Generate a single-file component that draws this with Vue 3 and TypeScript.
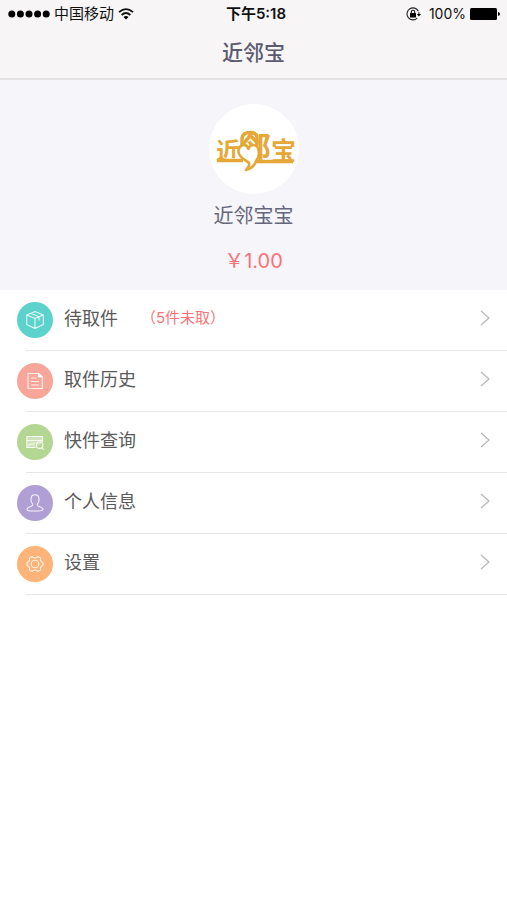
<script setup lang="ts">
type IconName = 'box' | 'history' | 'search' | 'person' | 'settings'

interface MenuItem {
  label: string
  icon: IconName
  note?: string
}

const items: MenuItem[] = [
  { label: '待取件', icon: 'box', note: '（5件未取）' },
  { label: '取件历史', icon: 'history' },
  { label: '快件查询', icon: 'search' },
  { label: '个人信息', icon: 'person' },
  { label: '设置', icon: 'settings' },
]
</script>

<template>
  <div class="page">
    <header class="top">
      <div class="status">
        <div class="status-left">
          <svg class="signal" viewBox="0 0 42 8" aria-hidden="true">
            <circle v-for="n in 5" :key="n" :cx="n * 8.6 - 4.8" cy="4" r="3.5" />
          </svg>
          <span>中国移动</span>
          <svg class="wifi" viewBox="0 0 16 12" aria-hidden="true">
            <path d="M1 4.2Q8-2 15 4.2M3.6 7Q8 3.1 12.4 7" fill="none" stroke="#111" stroke-width="1.8" />
            <path d="M5.5 9Q8 6.8 10.5 9L8 11.6Z" />
          </svg>
        </div>
        <strong class="time">下午5:18</strong>
        <div class="status-right">
          <svg class="lock" viewBox="0 0 15 14" aria-hidden="true">
            <path d="M12.4 4.2A6 6 0 1 0 11.2 11.2M12.9 5.3V7.5" fill="none" stroke="#222" stroke-width="1.1" />
            <path d="M10.8 7H15L12.9 9.6Z" />
            <rect x="4" y="6" width="6" height="4.6" rx=".5" />
            <path d="M5.3 6.4V5a1.7 1.7 0 0 1 3.4 0v1.4" fill="none" stroke="#111" stroke-width="1.1" />
          </svg>
          <span>100%</span>
          <svg class="battery" viewBox="0 0 30 12" aria-hidden="true">
            <rect width="27" height="12" rx="1.5" />
            <path d="M28 4Q30 4.5 30 6T28 8Z" />
          </svg>
        </div>
      </div>
      <h1 class="title">近邻宝</h1>
    </header>

    <section class="profile">
      <div class="avatar">
        <svg viewBox="0 0 90 90" role="img" aria-label="近邻宝">
          <g class="logo-text">
            <text x="7" y="56" font-size="24">近</text>
            <text x="31" y="55" font-size="31">邻</text>
            <text x="62" y="56" font-size="25">宝</text>
          </g>
          <path d="M8 56.5H34M46 57.5H84" fill="none" stroke="#e5a736" stroke-width="3.4" />
          <path d="M33 41V34Q34 28.500 41 28.500T48 34V42" fill="none" stroke="#e5a736" stroke-width="3.4" />
          <path
            d="M39.500 45C37 38 29 41 29.500 48C30 54 37 56 40 59C41 62 39 63 37 66C43 64 46 61 47 57C52 51 50 41 44.500 41C42 41 40 43 39.500 45Z"
            fill="#fff" stroke="#e5a736" stroke-width="2.6" stroke-linejoin="round"
          />
        </svg>
      </div>
      <p class="name">近邻宝宝</p>
      <p class="balance">￥1.00</p>
    </section>

    <nav>
      <ul class="menu">
        <li v-for="item in items" :key="item.icon">
          <a href="#" class="row">
            <span class="badge" :class="item.icon">
              <svg viewBox="0 0 20 20" aria-hidden="true">
                <g v-if="item.icon === 'box'">
                  <path d="M10 1.5L18.3 5V14.6L10 18.6L1.7 14.6V5ZM1.7 5L10 8.6L18.3 5M10 8.6V18.6M5.8 3.2L14 6.8V10.5" />
                </g>
                <g v-else-if="item.icon === 'history'">
                  <path d="M3 2.5H13.5L17.3 6V17.5H3Z" />
                  <path d="M13.5 2.5V6H17.3Z" fill="#fff" />
                  <path d="M6 7H11.5M6 10.5H14M6 14H14" />
                </g>
                <g v-else-if="item.icon === 'search'">
                  <path d="M2 4.5H17.5V10.5L11 15.5H2Z" fill="#fff" fill-opacity=".35" stroke="none" />
                  <path d="M10.5 15.5H1.8V4.5H17.5V10" />
                  <path d="M2 8.5H17M3 13.5L6 12H10" />
                  <circle cx="14.6" cy="13.2" r="3.2" />
                  <path d="M16.8 15.6L19 18" />
                </g>
                <g v-else-if="item.icon === 'person'">
                  <path d="M7.8 11.3C6 9.5 5.8 6.7 6.2 4.8C6.8 .8 13.2 .8 13.8 4.8C14.2 6.7 14 9.5 12.2 11.3C12 13 13.2 13.2 15 13.8C17.3 14.6 18 15.4 18 16.5C18 17.5 15.8 18 10 18S2 17.5 2 16.5C2 15.4 2.7 14.6 5 13.8C6.8 13.2 8 13 7.8 11.3Z" />
                </g>
                <g v-else>
                  <path d="M7 2.500L8.400 3.700H11.600L13 2.500L15.700 4.100L15.400 6L16.400 7.800L18 8.500V11.500L16.400 12.200L15.400 14L15.700 15.900L13 17.500L11.600 16.300H8.400L7 17.500L4.300 15.900L4.600 14L3.600 12.200L2 11.500V8.500L3.600 7.800L4.600 6L4.300 4.100Z" />
                  <circle cx="10" cy="10" r="3.8" />
                </g>
              </svg>
            </span>
            <span class="label">{{ item.label }}</span>
            <span v-if="item.note" class="note">{{ item.note }}</span>
            <svg class="chevron" viewBox="0 0 10 16" aria-hidden="true">
              <path d="M1 1L9 8L1 15" />
            </svg>
          </a>
        </li>
      </ul>
    </nav>
  </div>
</template>

<style>
body {
  margin: 0;
  background: #fff;
}
</style>

<style scoped>
.page {
  min-height: 100vh;
  background: #fff;
  font-family: Inter, "Noto Sans CJK SC", sans-serif;
  color: #5a5a5a;
}

.top {
  height: 78px;
  background: #f7f5f6;
  border-bottom: 2px solid #e2e1e4;
}

.status {
  display: grid;
  grid-template-columns: 1fr auto 1fr;
  align-items: center;
  height: 28px;
  padding: 0 7px 0 8px;
  font-size: 15px;
  line-height: 28px;
  color: #111;
}

.status-left,
.status-right {
  display: flex;
  align-items: center;
}

.status-left {
  gap: 4px;
}

.status-right {
  justify-content: flex-end;
  gap: 4px;
  font-size: 14px;
}

.signal {
  width: 42px;
  height: 8px;
}

.wifi {
  width: 16px;
  height: 12px;
}

.lock {
  width: 15px;
  height: 14px;
  margin-right: 4px;
}

.battery {
  width: 30px;
  height: 12px;
}

.time {
  padding-left: 4px;
  font-weight: 600;
}

.title {
  margin: 0;
  font-size: 21px;
  font-weight: 500;
  line-height: 50px;
  text-align: center;
  color: #5b5a70;
}

.profile {
  display: flex;
  flex-direction: column;
  align-items: center;
  height: 186px;
  padding-top: 24px;
  background: #f5f5fa;
}

.avatar {
  width: 90px;
  height: 90px;
  border-radius: 50%;
  background: #fff;
}

.avatar svg {
  display: block;
  width: 100%;
  height: 100%;
}

.logo-text {
  fill: #e5a736;
  font-family: "Noto Sans CJK SC", sans-serif;
  font-weight: 700;
}

.name,
.balance {
  margin: 0;
  font-size: 20px;
  line-height: 45px;
}

.name {
  color: #66667a;
}

.balance {
  color: #f87478;
}

.menu {
  margin: 0;
  padding: 0;
  list-style: none;
}

.row {
  display: flex;
  align-items: center;
  height: 59px;
  padding: 0 17px 2px;
  color: inherit;
  text-decoration: none;
  background: linear-gradient(#e6e6e8, #e6e6e8) 26px 100% / 100% 1px no-repeat;
}

.badge {
  display: flex;
  flex: none;
  align-items: center;
  justify-content: center;
  width: 36px;
  height: 36px;
  margin-right: 11px;
  border-radius: 50%;
}

.badge svg {
  width: 20px;
  height: 20px;
  fill: none;
  stroke: #fff;
  stroke-opacity: .85;
  stroke-width: 1.1;
  stroke-linejoin: round;
}

.box {
  background: #5bd2cb;
}

.history {
  background: #f8a59a;
}

.search {
  background: #b4d693;
}

.person {
  background: #b09fd5;
}

.settings {
  background: #feb378;
}

.label,
.note {
  margin-bottom: 6px;
}

.label {
  font-size: 18px;
}

.note {
  margin-left: 23px;
  font-size: 15px;
  color: #f87478;
}

.chevron {
  width: 10px;
  height: 16px;
  margin-bottom: 4px;
  margin-left: auto;
  fill: none;
  stroke: #b8b8b8;
  stroke-width: 1.3;
}
</style>
